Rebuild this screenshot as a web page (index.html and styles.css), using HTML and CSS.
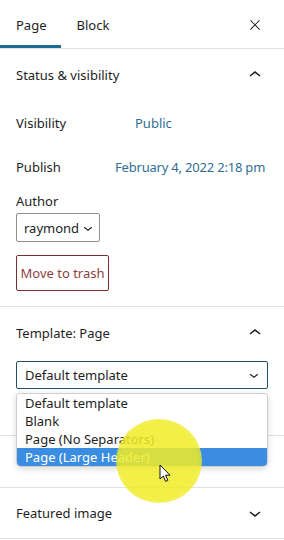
FILE: index.html
```html
<!DOCTYPE html>
<html lang="en">
<head>
    <meta charset="UTF-8">
    <meta name="viewport" content="width=device-width, initial-scale=1.0">
    <title>Page settings</title>
    <link rel="stylesheet" href="styles.css">
</head>
<body>
    <div class="sidebar">
        <div class="tabs">
            <div class="tab active">Page</div>
            <div class="tab">Block</div>
            <button class="icon-btn close" aria-label="Close settings">
                <svg viewBox="0 0 24 24" width="16" height="16"><path d="M13 11.8l6.1-6.3-1-1-6.1 6.2-6.1-6.2-1 1 6.1 6.3-6.5 6.7 1 1 6.5-6.6 6.5 6.6 1-1z"/></svg>
            </button>
        </div>

        <div class="panel">
            <div class="panel-header">
                <span>Status &amp; visibility</span>
                <svg viewBox="0 0 24 24" width="24" height="24"><path d="M6.5 12.4L12 8l5.5 4.4-.9 1.2L12 10l-4.6 3.6-.9-1.2z"/></svg>
            </div>
            <div class="panel-body">
                <div class="row">
                    <span class="row-label">Visibility</span>
                    <span class="link public">Public</span>
                </div>
                <div class="row row-publish">
                    <span class="row-label">Publish</span>
                    <span class="link date">February 4, 2022 2:18 pm</span>
                </div>
                <div class="author-label">Author</div>
                <div class="select small-select">
                    <span>raymond</span>
                    <svg viewBox="0 0 24 24" width="18" height="18"><path d="M17.5 11.6L12 16l-5.5-4.4.9-1.2L12 14l4.6-3.6.9 1.2z"/></svg>
                </div>
                <button class="trash">Move to trash</button>
            </div>
        </div>

        <div class="panel">
            <div class="panel-header">
                <span>Template: Page</span>
                <svg viewBox="0 0 24 24" width="24" height="24"><path d="M6.5 12.4L12 8l5.5 4.4-.9 1.2L12 10l-4.6 3.6-.9-1.2z"/></svg>
            </div>
            <div class="panel-body template-body">
                <div class="select-wrap">
                    <div class="select wide-select">
                        <span>Default template</span>
                        <svg viewBox="0 0 24 24" width="18" height="18"><path d="M17.5 11.6L12 16l-5.5-4.4.9-1.2L12 14l4.6-3.6.9 1.2z"/></svg>
                    </div>
                    <ul class="dropdown">
                        <li>Default template</li>
                        <li>Blank</li>
                        <li>Page (No Separators)</li>
                        <li class="hover">Page (Large Header)</li>
                    </ul>
                </div>
            </div>
        </div>

        <div class="panel hidden-panel"></div>

        <div class="panel">
            <div class="panel-header featured">
                <span>Featured image</span>
                <svg viewBox="0 0 24 24" width="24" height="24"><path d="M17.5 11.6L12 16l-5.5-4.4.9-1.2L12 14l4.6-3.6.9 1.2z"/></svg>
            </div>
        </div>

        <!-- screen recording cursor highlight -->
        <div class="spot"></div>
        <svg class="cursor" viewBox="0 0 12 19" width="12" height="19">
            <path d="M1 1 L1 15 L4.3 12 L6.6 17.4 L8.8 16.4 L6.6 11.2 L11 11.2 Z" fill="#fff" stroke="#111" stroke-width="1" stroke-linejoin="round"/>
        </svg>
    </div>
</body>
</html>
```

FILE: styles.css
```css
body {
    margin: 0;
    font-family: "Noto Sans", "Open Sans", sans-serif;
    font-size: 13px;
    color: #1e1e1e;
    background-color: #fff;
}
.sidebar {
    position: relative;
    width: 284px;
    height: 540px;
    overflow: hidden;
}
svg {
    fill: #1e1e1e;
    flex-shrink: 0;
}
.tabs {
    display: flex;
    align-items: center;
    height: 48px;
    border-bottom: 1px solid #e0e0e0;
}
.tab {
    height: 48px;
    line-height: 50px;
    padding: 0 14px 0 16px;
    box-sizing: border-box;
}
.tab.active {
    box-shadow: inset 0 -3px 0 #1e6a93; /* blue underline */
}
.icon-btn {
    margin-left: auto;
    margin-right: 21px;
    margin-top: 2px;
    padding: 0;
    border: none;
    background: none;
    display: flex;
}
.panel {
    border-bottom: 1px solid #e0e0e0;
}
.panel-header {
    display: flex;
    align-items: center;
    justify-content: space-between;
    height: 52px;
    padding: 0 17px 0 16px;
}
.panel-body {
    padding: 6px 16px 15px;
}
.row {
    display: flex;
    align-items: center;
    height: 32px;
    margin-bottom: 12px;
}
.row-publish {
    margin-bottom: 9px;
}
.row-label {
    width: 99px;
}
.link {
    color: #2f6f95;
}
.public {
    margin-left: 20px;
}
.date {
    white-space: nowrap;
    letter-spacing: -0.2px;
}
.author-label {
    line-height: 18px;
    margin-bottom: 3px;
}
.select {
    display: flex;
    align-items: center;
    justify-content: space-between;
    box-sizing: border-box;
    border: 1px solid #8c8f94;
    border-radius: 2px;
    background-color: #fff;
}
.small-select {
    width: 84px;
    height: 29px;
    padding: 0 4px 0 7px;
}
.trash {
    display: block;
    margin-top: 13px;
    height: 36px;
    width: 93px;
    padding: 0;
    font-family: inherit;
    font-size: 13px;
    color: #8a3f3f;
    background-color: #fff;
    border: 1px solid #7d2f2f;
    border-radius: 2px;
}
.template-body {
    padding: 2px 16px 46px;
}
.select-wrap {
    position: relative;
}
.wide-select {
    height: 28px;
    padding: 0 4px 0 8px;
    border: 1.5px solid #22506a; /* focused */
}
.dropdown {
    position: absolute;
    top: 32px;
    left: 0;
    right: 0;
    margin: 0;
    padding: 0;
    list-style: none;
    background-color: #fff;
    border: 1px solid #cfcfcf;
    border-radius: 3px 3px 5px 5px;
    box-shadow: 0 2px 6px rgba(0, 0, 0, 0.15);
    z-index: 2;
}
.dropdown li {
    height: 18px;
    line-height: 18px;
    padding: 0 8px;
}
.dropdown li.hover {
    background-color: #3b8de2;
    color: #fff;
    border-radius: 0 0 4px 4px;
}
.hidden-panel {
    height: 51px;
}
.featured {
    height: 50px;
}
.spot {
    position: absolute;
    left: 116px;
    top: 419px;
    width: 86px;
    height: 84px;
    border-radius: 50%;
    background: radial-gradient(circle, rgba(240, 236, 40, 0.86) 62%, rgba(240, 236, 40, 0.6) 90%, rgba(240, 236, 40, 0) 100%);
    z-index: 3;
    pointer-events: none;
}
.cursor {
    position: absolute;
    left: 159px;
    top: 464px;
    z-index: 4;
}
```
